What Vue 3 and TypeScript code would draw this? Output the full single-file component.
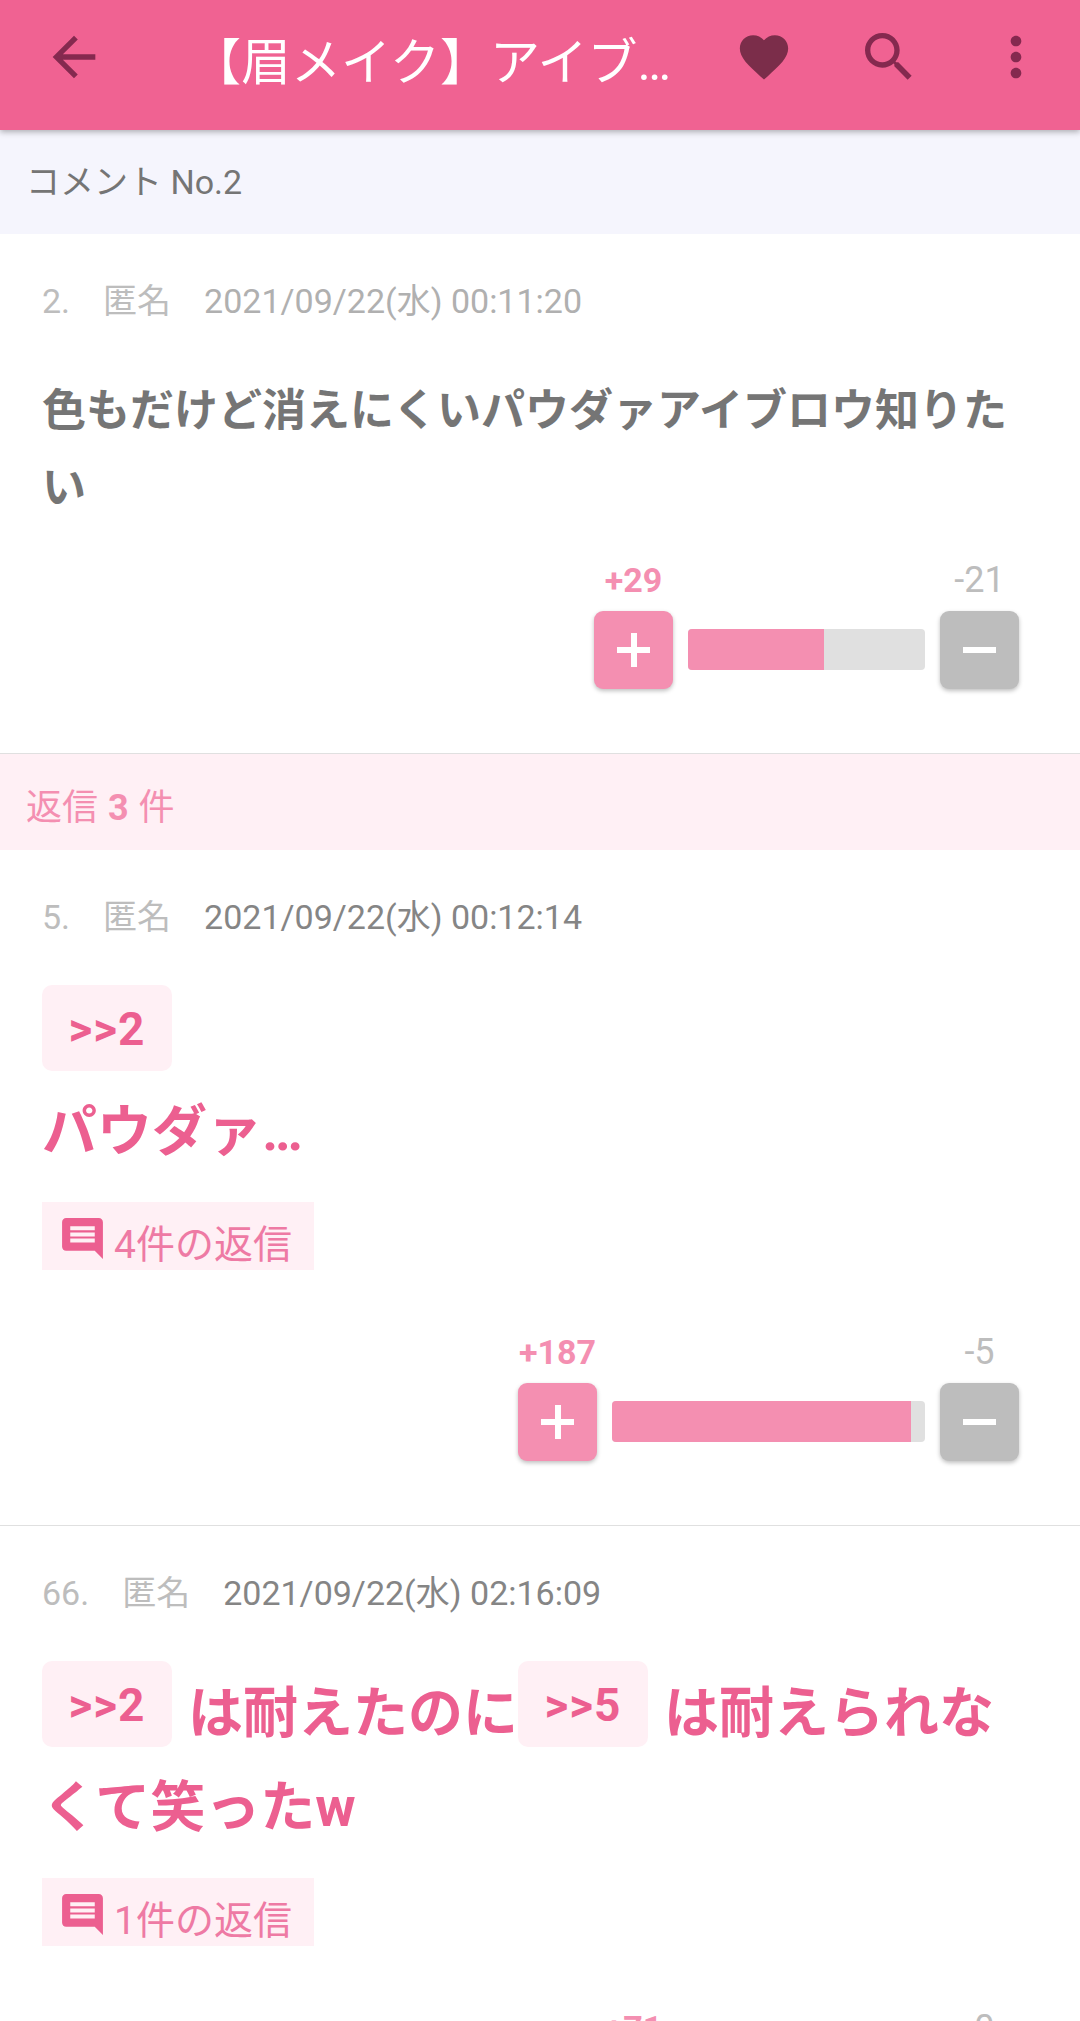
<template>
  <div class="page">
    <header class="appbar">
      <svg class="icon back" viewBox="0 0 24 24"><path d="M20 11H7.83l5.59-5.59L12 4l-8 8 8 8 1.41-1.41L7.83 13H20v-2z" /></svg>
      <div class="title">【眉メイク】アイブ…</div>
      <svg class="icon heart" viewBox="0 0 24 24"><path d="M12 21.35l-1.45-1.32C5.4 15.36 2 12.28 2 8.5 2 5.42 4.42 3 7.5 3c1.74 0 3.41.81 4.5 2.09C13.09 3.81 14.76 3 16.5 3 19.58 3 22 5.42 22 8.5c0 3.78-3.4 6.86-8.55 11.54L12 21.35z" /></svg>
      <svg class="icon search" viewBox="0 0 24 24"><path d="M15.5 14h-.79l-.28-.27C15.41 12.59 16 11.11 16 9.5 16 5.91 13.09 3 9.5 3S3 5.91 3 9.5 5.91 16 9.5 16c1.61 0 3.09-.59 4.23-1.57l.27.28v.79l5 4.99L20.49 19l-4.99-5zm-6 0C7.01 14 5 11.99 5 9.5S7.01 5 9.5 5 14 7.01 14 9.5 11.99 14 9.5 14z" /></svg>
      <svg class="icon more" viewBox="0 0 24 24"><path d="M12 8c1.1 0 2-.9 2-2s-.9-2-2-2-2 .9-2 2 .9 2 2 2zm0 2c-1.1 0-2 .9-2 2s.9 2 2 2 2-.9 2-2-.9-2-2-2zm0 6c-1.1 0-2 .9-2 2s.9 2 2 2 2-.9 2-2-.9-2-2-2z" /></svg>
    </header>

    <div class="subhead">コメント No.2</div>

    <template v-for="c in comments" :key="c.no">
      <article class="comment">
        <div class="meta" :class="{ seen: c.seen }">
          <span class="no">{{ c.no }}.</span>
          <span class="name">匿名</span>
          <span class="date">{{ c.date }}</span>
        </div>

        <p class="body" :class="{ reply: c.reply }">
          <template v-for="(part, i) in c.parts" :key="i">
            <span v-if="part.ref" class="ref">&gt;&gt;{{ part.ref }}</span>
            <br v-else-if="part.br" />
            <template v-else>{{ part.text }}</template>
          </template>
        </p>

        <div v-if="c.replies" class="replies">
          <svg class="chat" viewBox="0 0 24 24"><path d="M20 2H4c-1.1 0-2 .9-2 2v12c0 1.1.9 2 2 2h14l4 4V4c0-1.1-.9-2-2-2zm-2 12H6v-2h12v2zm0-3H6V9h12v2zm0-3H6V6h12v2z" /></svg>
          <span>{{ c.replies }}件の返信</span>
        </div>

        <div class="vote">
          <div class="vote-col">
            <span class="count plus">+{{ c.up }}</span>
            <button class="btn plus"><i class="h"></i><i class="v"></i></button>
          </div>
          <div class="bar" :style="{ width: c.barWidth + 'px' }">
            <div class="fill" :style="{ width: c.fill + '%' }"></div>
          </div>
          <div class="vote-col">
            <span class="count minus">-{{ c.down }}</span>
            <button class="btn minus"><i class="h"></i></button>
          </div>
        </div>
      </article>

      <div v-if="c.no === 2" class="reply-head">返信 <b>3</b> 件</div>
    </template>
  </div>
</template>

<script setup lang="ts">
interface Part {
  text?: string
  ref?: number
  br?: boolean
}

interface Comment {
  no: number
  date: string
  seen?: boolean
  reply?: boolean
  parts: Part[]
  replies?: number
  up: number
  down: number
  barWidth: number
  fill: number
}

const comments: Comment[] = [
  {
    no: 2,
    date: '2021/09/22(水) 00:11:20',
    seen: true,
    parts: [{ text: '色もだけど消えにくいパウダァアイブロウ知りたい' }],
    up: 29,
    down: 21,
    barWidth: 237,
    fill: 57.5
  },
  {
    no: 5,
    date: '2021/09/22(水) 00:12:14',
    reply: true,
    parts: [{ ref: 2 }, { br: true }, { text: 'パウダァ…' }],
    replies: 4,
    up: 187,
    down: 5,
    barWidth: 313,
    fill: 95.5
  },
  {
    no: 66,
    date: '2021/09/22(水) 02:16:09',
    reply: true,
    parts: [{ ref: 2 }, { text: 'は耐えたのに' }, { ref: 5 }, { text: 'は耐えられなくて笑ったw' }],
    replies: 1,
    up: 71,
    down: 0,
    barWidth: 237,
    fill: 100
  }
]
</script>

<style>
html, body {
  margin: 0;
  background: #fff;
}
</style>

<style scoped>
.page {
  width: 1080px;
  height: 2021px;
  overflow: hidden;
  position: relative;
  font-family: Roboto, "Noto Sans CJK JP", sans-serif;
  background: #fff;
}

.appbar {
  position: relative;
  height: 130px;
  background: #f06292;
  display: flex;
  align-items: center;
  box-shadow: 0 2px 6px rgba(0, 0, 0, 0.3);
  padding-bottom: 16px;
  box-sizing: border-box;
}
.icon {
  flex: none;
  fill: #85294f;
}
.back { width: 64px; height: 64px; margin-left: 42px; }
.title {
  width: 544px;
  margin: 12px 0 0 85px;
  color: #fff;
  font-size: 50px;
  line-height: 64px;
  white-space: nowrap;
}
.heart { width: 58px; height: 58px; fill: #7b2d4a; }
.search { width: 64px; height: 64px; margin-left: 64px; }
.more { width: 64px; height: 64px; margin-left: 63px; }

.subhead {
  height: 104px;
  line-height: 104px;
  padding-left: 26px;
  background: #f5f5fd;
  color: #757575;
  font-size: 34px;
}

.comment {
  padding: 45px 61px 64px 42px;
  border-bottom: 1px solid #e0e0e0;
}

.meta {
  display: flex;
  line-height: 44px;
  font-size: 34px;
  color: #bdbdbd;
}
.meta .no { margin-right: 33px; }
.meta .date { margin-left: 33px; color: #858585; }
.meta.seen .date { color: #b0b0b0; }

.body {
  margin: 50px 0 0;
  font-size: 44px;
  line-height: 77px;
  font-weight: 700;
  color: #757575;
}
.body.reply {
  margin-top: 46px;
  font-size: 55px;
  line-height: 94px;
  color: #ec5f90;
}
.ref {
  display: inline-block;
  width: 130px;
  height: 86px;
  line-height: 88px;
  margin-right: 16px;
  vertical-align: 11px;
  text-align: center;
  border-radius: 10px;
  background: #fff0f5;
  font-size: 46px;
  letter-spacing: 1px;
}

.replies {
  display: flex;
  width: 272px;
  height: 68px;
  box-sizing: border-box;
  margin-top: 24px;
  padding-left: 16px;
  background: #fff0f5;
  color: #ee7aa4;
  font-size: 39px;
  line-height: 86px;
  overflow: hidden;
}
.chat {
  flex: none;
  width: 49px;
  height: 49px;
  margin: 12px 7px 0 0;
  fill: #ec5f90;
}

.vote {
  display: flex;
  justify-content: flex-end;
  align-items: flex-end;
  margin-top: 62px;
}
.body + .vote { margin-top: 33px; }
.vote-col {
  display: flex;
  flex-direction: column;
  align-items: center;
  gap: 11px;
}
.count {
  height: 40px;
  line-height: 40px;
}
.count.plus { color: #f48fb1; font-size: 34px; font-weight: 700; }
.count.minus { color: #bdbdbd; font-size: 36px; }

.btn {
  position: relative;
  display: block;
  width: 79px;
  height: 78px;
  padding: 0;
  border: 0;
  border-radius: 9px;
  box-shadow: 0 2px 4px rgba(0, 0, 0, 0.25);
}
.btn.plus { background: #f48fb1; }
.btn.minus { background: #bdbdbd; }
.btn i {
  position: absolute;
  background: #fff;
}
.btn .h { left: 23px; top: 36px; width: 33px; height: 6px; }
.btn .v { left: 37px; top: 22px; width: 6px; height: 34px; }

.bar {
  height: 41px;
  margin: 0 15px 19px;
  border-radius: 4px;
  background: #e0e0e0;
  overflow: hidden;
}
.fill {
  height: 100%;
  background: #f48fb1;
}

.reply-head {
  height: 96px;
  line-height: 108px;
  padding-left: 26px;
  background: #fff0f5;
  color: #f48fb1;
  font-size: 36px;
  overflow: hidden;
}
.reply-head b { margin: 0 1px; }
</style>
